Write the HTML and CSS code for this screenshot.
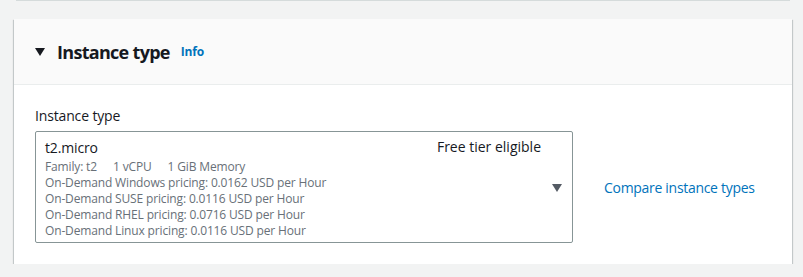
FILE: index.html
```html
<!DOCTYPE html>
<html lang="en">
<head>
    <meta charset="UTF-8">
    <title>Instance type</title>
    <link rel="stylesheet" href="styles.css">
</head>
<body>
    <div class="prev-card"></div>
    <div class="card">
        <div class="card-header">
            <svg class="expand-icon" width="10" height="8" viewBox="0 0 10 8"><path d="M0 0 H10 L5 8 Z" fill="#16191f"/></svg>
            <h2>Instance type</h2>
            <a class="info" href="#">Info</a>
        </div>
        <div class="card-body">
            <div class="label">Instance type</div>
            <div class="select-row">
                <div class="select">
                    <div class="option">
                        <div class="option-name">t2.micro</div>
                        <div class="option-desc">
                            <span class="spec">Family: t2</span><span class="spec">1 vCPU</span><span class="spec">1 GiB Memory</span>
                        </div>
                        <div class="option-desc">On-Demand Windows pricing: 0.0162 USD per Hour</div>
                        <div class="option-desc">On-Demand SUSE pricing: 0.0116 USD per Hour</div>
                        <div class="option-desc">On-Demand RHEL pricing: 0.0716 USD per Hour</div>
                        <div class="option-desc">On-Demand Linux pricing: 0.0116 USD per Hour</div>
                    </div>
                    <div class="option-tag">Free tier eligible</div>
                    <svg class="caret" width="10" height="8" viewBox="0 0 10 8"><path d="M0 0 H10 L5 8 Z" fill="#545b64"/></svg>
                </div>
                <a class="compare" href="#">Compare instance types</a>
            </div>
        </div>
    </div>
</body>
</html>
```

FILE: styles.css
```css
body {
    margin: 0;
    background: #f2f3f3;
    font-family: "Open Sans", Roboto, Arial, sans-serif;
    letter-spacing: -0.15px;
    color: #16191f;
}

.prev-card {
    height: 1px;
    margin: 0 13px 0 16px;
    background: #d5dbdb;
}

.card {
    margin: 18px 11px 0 14px;
    background: #fff;
    box-shadow: 0 1px 1px 0 rgba(0, 28, 36, 0.3), 1px 1px 1px 0 rgba(0, 28, 36, 0.15), -1px 1px 1px 0 rgba(0, 28, 36, 0.15);
}

.card-header {
    display: flex;
    align-items: center;
    height: 65px;
    padding: 0 21px;
    background: #fafafa;
    border-bottom: 1px solid #eaeded;
}

.expand-icon {
    margin-right: 12px;
}

h2 {
    margin: 0;
    font-size: 18px;
    font-weight: 700;
    line-height: 22px;
    letter-spacing: -0.7px;
}

.info {
    margin-left: 11px;
    font-size: 12px;
    font-weight: 700;
    color: #0073bb;
    text-decoration: none;
}

.card-body {
    padding: 20px 20px 21px 21px;
}

.label {
    font-size: 14px;
    line-height: 22px;
    margin-bottom: 4px;
}

.select-row {
    display: flex;
    align-items: center;
    gap: 31px;
}

.select {
    display: flex;
    width: 517px;
    padding: 4px 10px 3px 9px;
    border: 1px solid #879596;
    border-radius: 2px;
}

.option {
    flex: 1;
}

.option-name {
    font-size: 14px;
    line-height: 23px;
}

.option-desc {
    font-size: 12px;
    line-height: 16px;
    color: #687078;
}

.spec {
    margin-right: 16px;
}

.option-tag {
    font-size: 14px;
    line-height: 22px;
    letter-spacing: 0;
}

.caret {
    align-self: center;
    margin-left: 11px;
}

.compare {
    font-size: 14px;
    letter-spacing: -0.3px;
    color: #0073bb;
    text-decoration: none;
}
```
